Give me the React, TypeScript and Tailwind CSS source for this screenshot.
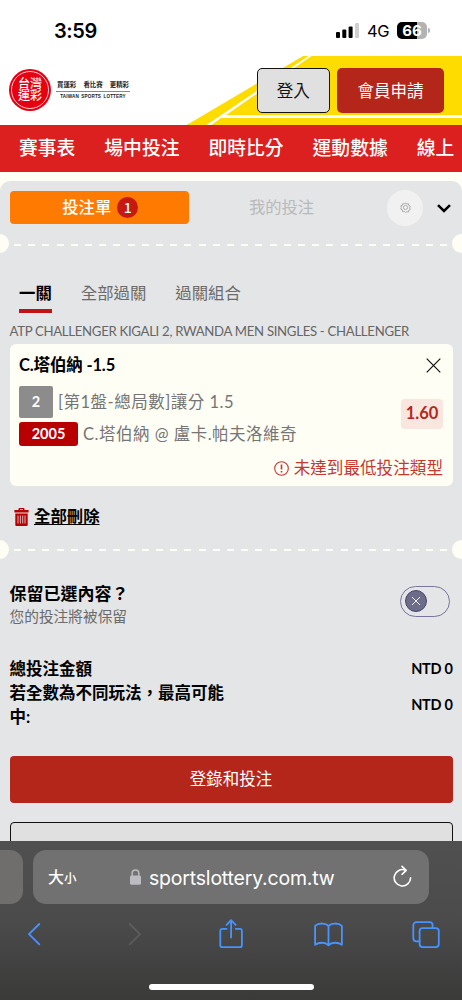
import { useState } from "react";
import type { ReactNode } from "react";
import clsx from "clsx";

const navItems = ["賽事表", "場中投注", "即時比分", "運動數據", "線上"];
const betTabs = ["一關", "全部過關", "過關組合"];

function StatusBar() {
  return (
    <div className="flex h-14 items-start justify-between bg-white pl-[54px] pr-[32px] font-['Inter','Liberation_Sans',sans-serif] text-black">
      <span className="mt-[17px] text-[20px] font-semibold leading-7 tracking-[-0.4px]">3:59</span>
      <div className="mt-[22px] flex h-[17px] items-center">
        <svg width="23" height="15" viewBox="0 0 23 15" className="mr-[8px]">
          <rect x="0" y="9" width="4" height="6" rx="1" />
          <rect x="6.3" y="6.5" width="4" height="8.5" rx="1" />
          <rect x="12.6" y="3.5" width="4" height="11.5" rx="1" />
          <rect x="19" y="0" width="4" height="15" rx="1" fill="#cfcfcf" />
        </svg>
        <span className="mr-[8px] w-[22px] text-[16.5px] leading-4 tracking-[-0.3px]">4G</span>
        <div className="flex h-[17px] w-[30px] items-center justify-center rounded-[5px] bg-[linear-gradient(90deg,#000_66%,#b3b3b3_66%)] text-[15px] font-bold leading-none text-white">
          66
        </div>
        <span className="ml-px h-[5px] w-[2px] rounded-r-full bg-[#b3b3b3]" />
      </div>
    </div>
  );
}

function Logo() {
  return (
    <div className="flex items-center">
      <div className="flex size-[42px] items-center justify-center rounded-full bg-[#e60012]">
        <div className="flex size-[38px] flex-col items-center justify-center rounded-full border border-white/80 text-[12px] font-medium text-white">
          <span className="h-[12.5px] leading-[12.5px]">台灣</span>
          <span className="h-[12.5px] leading-[12.5px]">運彩</span>
        </div>
      </div>
      <div className="mb-[2px] ml-[5px] flex w-[74px] flex-col items-center text-[#222]">
        <div className="flex w-full justify-between whitespace-nowrap border-b border-[#888] px-px pb-px text-[6.4px] font-bold leading-[11px]">
          <span>買運彩</span>
          <span>看比賽</span>
          <span>更精彩</span>
        </div>
        <span className="whitespace-nowrap pt-[2px] font-['Liberation_Sans',sans-serif] text-[4.6px] font-bold leading-[6px] tracking-[0.15px] [word-spacing:1px]">
          TAIWAN SPORTS LOTTERY
        </span>
      </div>
    </div>
  );
}

function Header() {
  return (
    <header className="relative flex h-[69px] items-start justify-between bg-white pl-[9px] pr-[18px]">
      <svg className="absolute inset-0" width="462" height="69" viewBox="0 0 462 69">
        <polygon points="185,70 303,0 462,0 462,70" fill="#ffdc00" />
        <polygon points="205,70 308.5,0 311.5,0 226,59 462,59 462,62 221,62 210,70" fill="#fff" />
      </svg>
      <div className="relative mt-[13px]">
        <Logo />
      </div>
      <div className="relative mt-[12px] flex gap-[7px] text-[16.5px]">
        <button className="h-[45px] w-[73.5px] rounded-[5px] border border-[#111] bg-[#e0e0e0] pt-px text-[#111]">
          登入
        </button>
        <button className="h-[45px] w-[107px] rounded-[5px] bg-[#b5261a] pt-px text-white">會員申請</button>
      </div>
    </header>
  );
}

function Divider() {
  return (
    <div className="flex h-[19px] items-center justify-between overflow-hidden">
      <span className="-ml-[10px] size-[19px] shrink-0 rounded-full bg-[#fffef5]" />
      <span className="mt-[2px] ml-[5px] h-[2px] flex-1 bg-[repeating-linear-gradient(90deg,#fffef5_0_7px,transparent_7px_14.2px)]" />
      <span className="-mr-[9px] ml-[3px] size-[19px] shrink-0 rounded-full bg-[#fffef5]" />
    </div>
  );
}

function BetCard() {
  return (
    <div className="mx-[9.5px] flex h-[142.5px] justify-between rounded-[6px] bg-[#fffef5] px-[9.5px]">
      <div className="w-0 whitespace-nowrap pt-[9px]">
        <p className="text-[16.5px] font-bold leading-6 tracking-[-0.15px] text-black">C.塔伯納 -1.5</p>
        <div className="mt-[9px] flex items-center text-[16.5px] text-[#757575]">
          <span className="flex h-[32px] w-[34px] shrink-0 items-center justify-center rounded-[2px] bg-[#8c8c8c] text-[14.5px] font-bold text-white">
            2
          </span>
          <span className="ml-[5px] leading-[32px] tracking-[0.5px]">[第1盤-總局數]讓分 1.5</span>
        </div>
        <div className="mt-[4px] flex items-center text-[16.5px] text-[#757575]">
          <span className="flex h-[24px] w-[59px] shrink-0 items-center justify-center rounded-[3px] bg-[#b80000] text-[14.5px] font-bold text-white">
            2005
          </span>
          <span className="ml-[5px] leading-[24px] tracking-[0.5px]">C.塔伯納 @ 盧卡.帕夫洛維奇</span>
        </div>
      </div>
      <div className="flex flex-col items-end pt-[14px]">
        <svg width="15" height="15" viewBox="0 0 15 15" className="mr-[2px]" stroke="#111" strokeWidth="1.2">
          <path d="M.7.7l13.6 13.6M14.3.7L.7 14.3" />
        </svg>
        <span className="mt-[26px] flex h-[30px] w-[42px] items-center justify-center rounded-[4px] bg-[#f8e6df] text-[16.5px] font-bold text-[#b5261a]">
          1.60
        </span>
        <div className="mt-[27.5px] flex items-center gap-[5px] whitespace-nowrap text-[16.6px] leading-6 text-[#c5372f]">
          <svg width="15" height="15" viewBox="0 0 15 15" fill="none" stroke="currentColor">
            <circle cx="7.5" cy="7.5" r="6.8" strokeWidth="1.1" />
            <path d="M7.5 3.5v5M7.5 10v1.6" strokeWidth="1.6" />
          </svg>
          未達到最低投注類型
        </div>
      </div>
    </div>
  );
}

function TrashIcon() {
  return (
    <svg width="15" height="18" viewBox="0 0 15 18" fill="#b80000">
      <path d="M4.5 2V.9c0-.5.4-.9.9-.9h4.2c.5 0 .9.4.9.9V2H14.6v2.6H.4V2zM6 2h3v-.7H6z" />
      <path d="M1.3 5.5h12.4V17c0 .5-.4.9-.9.9H2.2c-.5 0-.9-.4-.9-.9z" />
      <path d="M4 7.5v8M6.4 7.5v8M8.7 7.5v8M11 7.5v8" stroke="#f0dcdc" strokeWidth=".8" />
    </svg>
  );
}

function Toggle({ on, onChange }: { on: boolean; onChange: (on: boolean) => void }) {
  return (
    <button
      onClick={() => onChange(!on)}
      className={clsx(
        "mb-[6px] flex h-[31px] w-[50px] items-center rounded-full border border-[#77759b] px-[4px]",
        on && "justify-end"
      )}
    >
      <span className="flex size-[22px] items-center justify-center rounded-full border border-[#47456f] bg-[#6d6c89]">
        <svg width="8" height="8" viewBox="0 0 8 8" stroke="#eee" strokeWidth="1">
          <path d="M0 0l8 8M8 0L0 8" />
        </svg>
      </span>
    </button>
  );
}

function ToolbarIcon({ width, height = 30, children }: { width: number; height?: number; children: ReactNode }) {
  return (
    <svg
      width={width}
      height={height}
      viewBox={`0 0 ${width} ${height}`}
      fill="none"
      stroke="#4793ff"
      strokeWidth="1.8"
      strokeLinecap="round"
      strokeLinejoin="round"
    >
      {children}
    </svg>
  );
}

function BrowserBar() {
  return (
    <footer className="flex h-[159.5px] shrink-0 flex-col bg-[linear-gradient(180deg,#505050_0%,#4c4b4b_50%,#3a3a39_100%)] font-['Inter','Liberation_Sans','Noto_Sans_CJK_TC',sans-serif]">
      <div className="mt-[9.5px] flex h-[54px] gap-[10px] text-white">
        <div className="w-[23px] rounded-r-[13px] bg-[#706e6d]" />
        <div className="flex w-[396px] items-center rounded-[13px] bg-[#717171] pl-[15px] pr-[17px]">
          <span className="flex w-[82px] items-baseline">
            <span className="text-[16px] font-medium">大</span>
            <span className="text-[12.5px] font-medium">小</span>
          </span>
          <svg width="11" height="16" viewBox="0 0 11 16" className="mb-px">
            <path d="M2.2 7V4.3a3.3 3.3 0 0 1 6.6 0V7" fill="none" stroke="#bdbbc2" strokeWidth="1.5" />
            <rect x="0" y="6.5" width="11" height="9.3" rx="1.6" fill="#bdbbc2" />
          </svg>
          <span className="ml-[8px] mt-px w-[186px] whitespace-nowrap text-[19.5px] leading-6 tracking-[-0.2px]">
            sportslottery.com.tw
          </span>
          <svg
            width="19"
            height="23"
            viewBox="0 0 19 23"
            fill="none"
            stroke="#fff"
            strokeWidth="1.6"
            strokeLinecap="round"
            strokeLinejoin="round"
            className="mb-[2px] ml-auto"
          >
            <path d="M12.5 5.2A8.2 8.2 0 1 0 17.6 12.8" />
            <path d="M9 1.3l4.2 4-4.2 4" />
          </svg>
        </div>
      </div>
      <div className="mt-[14px] flex h-[31px] items-center pl-[27px]">
        <ToolbarIcon width={14}>
          <path d="M12.3 5L2 15.2l10.3 10.2" />
        </ToolbarIcon>
        <span className="ml-[87px] opacity-30 grayscale">
          <ToolbarIcon width={14}>
            <path d="M1.7 5L12 15.2 1.7 25.4" />
          </ToolbarIcon>
        </span>
        <span className="ml-[77px]">
          <ToolbarIcon width={24}>
            <path d="M7.5 9.8H3.3a2 2 0 0 0-2 2v14.4a2 2 0 0 0 2 2h17.6a2 2 0 0 0 2-2V11.8a2 2 0 0 0-2-2h-4.2" />
            <path d="M12.1 18.5V1.2M7.6 5.8l4.5-4.6 4.5 4.6" />
          </ToolbarIcon>
        </span>
        <span className="ml-[71px]">
          <ToolbarIcon width={29}>
            <path d="M14.5 7.2C12 3.7 4.5 3.7 1.1 6.8v19C5 23 11.5 23 14.5 26.3 17.5 23 24 23 27.9 25.8v-19C24.5 3.7 17 3.7 14.5 7.2zM14.5 7.2v19.1" />
          </ToolbarIcon>
        </span>
        <span className="ml-[69px]">
          <ToolbarIcon width={28}>
            <rect x="7.6" y="9.1" width="19.2" height="19" rx="3" />
            <path d="M7.6 22.3H4.3a3 3 0 0 1-3-3V6.2a3 3 0 0 1 3-3h13.3a3 3 0 0 1 3 3v2.9" />
          </ToolbarIcon>
        </span>
      </div>
      <div className="mx-auto mt-[35px] h-[6px] w-[165px] shrink-0 rounded-full bg-white" />
    </footer>
  );
}

export default function App() {
  const [activeTab, setActiveTab] = useState(0);
  const [keep, setKeep] = useState(false);

  return (
    <div className="flex h-[1000px] w-[462px] flex-col overflow-hidden bg-[#fffef5] font-['Lato','Noto_Sans_CJK_TC',sans-serif]">
      <StatusBar />
      <Header />
      <nav className="flex h-[46.5px] shrink-0 items-center gap-[29px] overflow-hidden whitespace-nowrap bg-[#dc1f1f] pl-[19px] text-[18.8px] font-medium text-white">
        {navItems.map((item) => (
          <span key={item}>{item}</span>
        ))}
      </nav>

      <main className="mt-[9.5px] min-h-0 flex-1 overflow-hidden rounded-t-[10px] bg-[#e4e5e7]">
        <div className="flex h-[53px] items-center pl-[9.5px]">
          <button className="flex h-[33px] w-[179.5px] items-center justify-center gap-[6px] rounded-[4px] bg-[#ff7a00] pl-[2px] text-[16.3px] font-medium text-white">
            投注單
            <span className="flex size-[21px] items-center justify-center rounded-full bg-[#c51a10] font-['Noto_Sans_CJK_TC',sans-serif] text-[14px]">
              1
            </span>
          </button>
          <span className="ml-[60px] w-[138px] text-[16.3px] text-[#b8b9ba]">我的投注</span>
          <span className="flex size-[36px] items-center justify-center rounded-full bg-[#f1f1f1]">
            <svg width="11" height="11" viewBox="0 0 24 24" fill="none" stroke="#a5a5a5" strokeWidth="2">
              <path d="M12 1.5l2.5 3 3.8-.8.8 3.8 3.4 2-1.5 3.5 1.5 3.5-3.6 1.7-.6 3.8-3.8-.6L12 23l-2.5-2.6-3.8.6-.6-3.8L1.5 15.5 3 12 1.5 8.5l3.4-1 .8-3.8 3.8.8z" />
              <circle cx="12" cy="12" r="4.5" />
            </svg>
          </span>
          <svg
            width="14"
            height="9"
            viewBox="0 0 14 9"
            fill="none"
            stroke="#000"
            strokeWidth="2.5"
            className="ml-[14px] mt-[1px]"
          >
            <path d="M1 1.2l6 5.8 6-5.8" />
          </svg>
        </div>
        <Divider />

        <div className="mt-[28px] flex gap-[29px] pl-[19px] text-[16.4px]">
          {betTabs.map((tab, i) => (
            <button
              key={tab}
              onClick={() => setActiveTab(i)}
              className={clsx(
                "h-[32px] border-b-4 pb-[4px] leading-6",
                i === activeTab ? "border-[#c1121a] font-bold text-black" : "border-transparent text-[#6b6b6b]"
              )}
            >
              {tab}
            </button>
          ))}
        </div>
        <p className="mt-[8px] h-[22.5px] whitespace-nowrap pl-[9.5px] text-[13.2px] leading-5 tracking-[-0.31px] text-[#666]">
          ATP CHALLENGER KIGALI 2, RWANDA MEN SINGLES - CHALLENGER
        </p>
        <BetCard />

        <button className="mt-[18.5px] flex h-6 items-center gap-[5px] pl-[14px] text-[16.4px] font-bold text-black">
          <TrashIcon />
          <span className="underline underline-offset-2">全部刪除</span>
        </button>
        <div className="mt-[11px]">
          <Divider />
        </div>

        <div className="mt-[23px] flex items-center justify-between pl-[9.5px] pr-[12px]">
          <div>
            <p className="text-[17px] font-bold leading-6 text-black">保留已選內容？</p>
            <p className="text-[14.7px] leading-[21px] text-[#6b6b6b]">您的投注將被保留</p>
          </div>
          <Toggle on={keep} onChange={setKeep} />
        </div>

        <dl className="mt-[30px] px-[9.5px] text-[16.5px] font-bold leading-6 text-black">
          <div className="flex items-center justify-between">
            <dt>總投注金額</dt>
            <dd className="text-[14.5px] tracking-[-0.3px]">NTD 0</dd>
          </div>
          <div className="flex items-center justify-between">
            <dt className="w-[222px]">若全數為不同玩法，最高可能中:</dt>
            <dd className="text-[14.5px] tracking-[-0.3px]">NTD 0</dd>
          </div>
        </dl>

        <div className="mx-[9.5px] mt-[27px] flex flex-col gap-[18.5px]">
          <button className="h-[47.5px] rounded-[4px] bg-[#b5261a] pt-px text-[16.5px] text-white">登錄和投注</button>
          <div className="h-[47px] rounded-[4px] border border-[#111] bg-[#e0e0e0]" />
        </div>
      </main>

      <BrowserBar />
    </div>
  );
}
